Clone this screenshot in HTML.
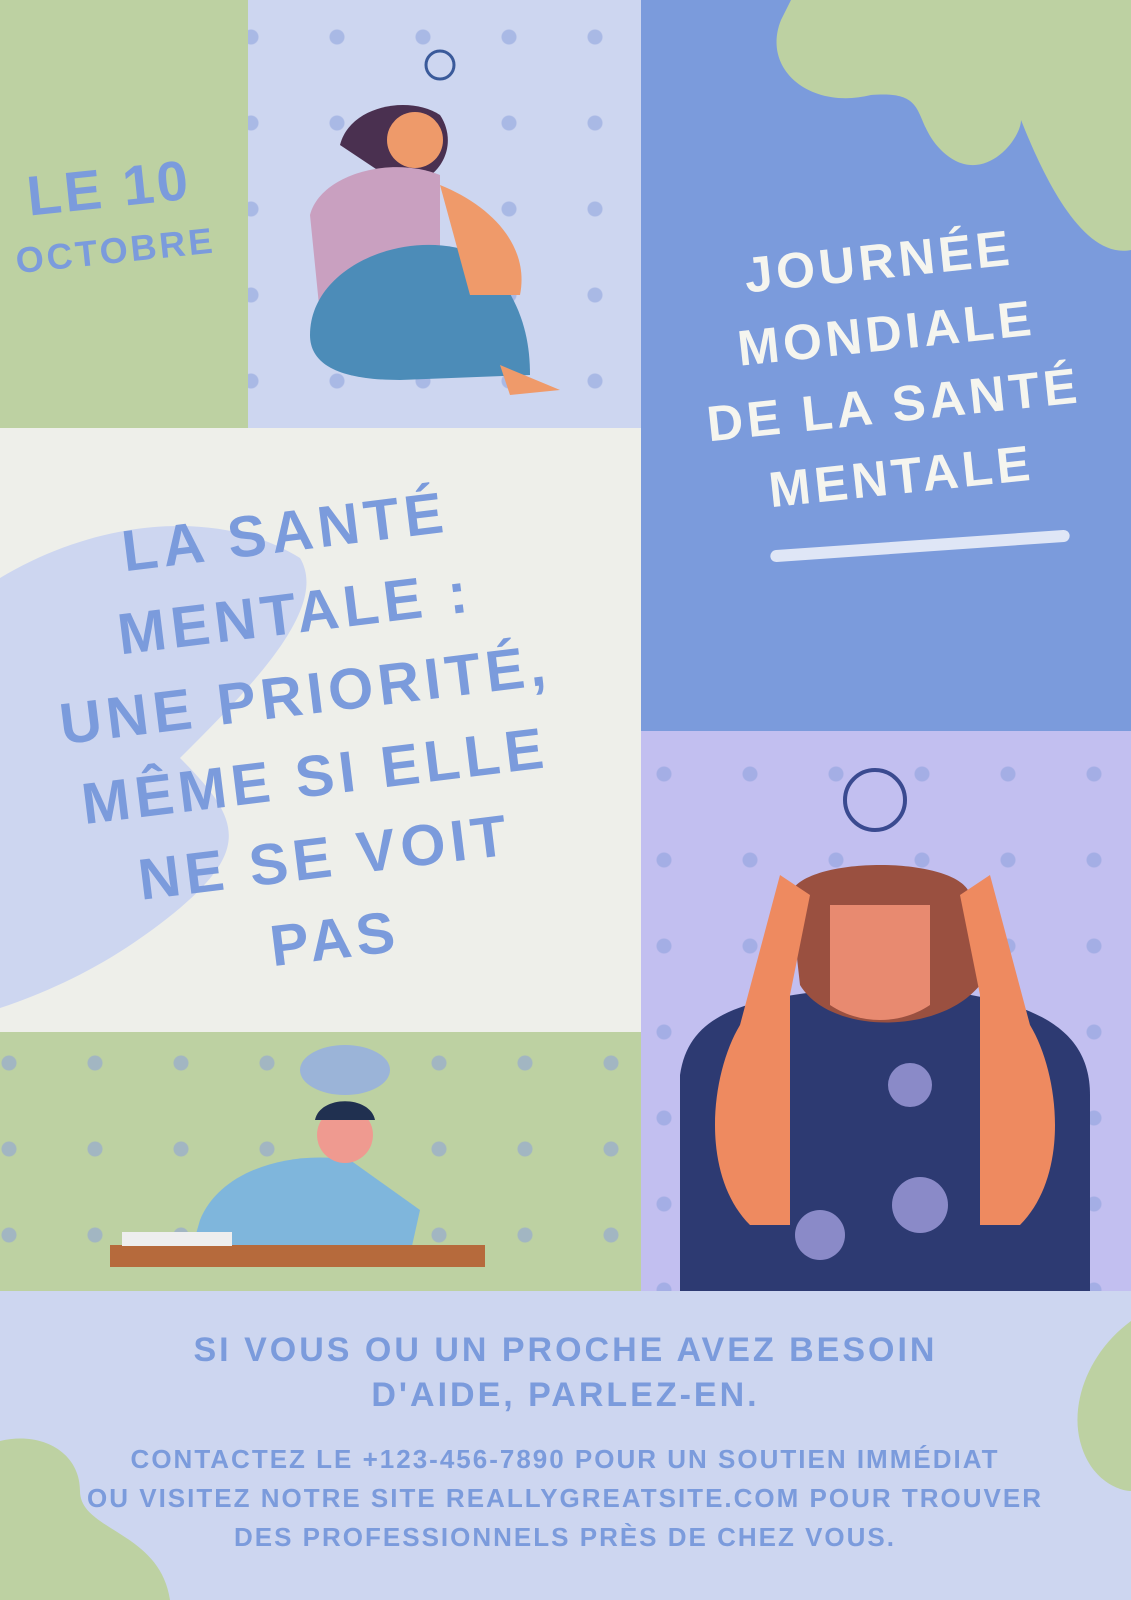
<!DOCTYPE html>
<html><head><meta charset="utf-8"><style>
*{margin:0;padding:0;box-sizing:border-box}
body{width:1131px;height:1600px;position:relative;overflow:hidden;font-family:"Liberation Sans",sans-serif;font-weight:bold;background:#cdd6f0}
.p{position:absolute;overflow:hidden}
.dots{background-image:radial-gradient(circle,rgba(140,160,220,.55) 7px,transparent 8px);background-size:86px 86px}
.t{position:absolute;text-align:center;text-transform:uppercase}
</style></head><body>
<div class="p" style="left:0;top:0;width:248px;height:428px;background:#bdd1a2"></div>
<div class="p dots" style="left:248px;top:0;width:393px;height:428px;background-color:#cdd6f0;background-position:-40px -6px"></div>
<div class="p" style="left:641px;top:0;width:490px;height:731px;background:#7b9bdc">
<svg width="490" height="260" style="position:absolute;left:0;top:0"><path d="M140 20 C120 70 170 110 230 95 C290 90 270 120 300 150 C340 190 380 140 380 120 C400 170 440 260 490 250 L490 0 L150 0 Z" fill="#bdd1a2"/></svg>
</div>
<div class="p" style="left:0;top:428px;width:641px;height:604px;background:#eeefea">
<svg width="641" height="604" style="position:absolute;left:0;top:0"><path d="M0 150 C100 90 220 80 300 130 C330 180 250 260 180 330 C240 390 250 420 180 480 C120 530 60 560 0 580 Z" fill="#cdd6f0"/></svg>
</div>
<div class="p dots" style="left:0;top:1032px;width:641px;height:259px;background-color:#bdd1a2;background-position:-34px -12px"></div>
<div class="p dots" style="left:641px;top:731px;width:490px;height:560px;background-color:#c2bff0;background-position:-20px 0"></div>
<div class="p" style="left:0;top:1291px;width:1131px;height:309px;background:#cdd6f0">
<svg width="1131" height="309" style="position:absolute;left:0;top:0"><path d="M0 150 C40 140 80 160 80 200 C80 240 160 240 170 309 L0 309 Z" fill="#bdd1a2"/><path d="M1131 30 C1090 60 1070 110 1080 150 C1090 190 1120 200 1131 200 Z" fill="#bdd1a2"/></svg>
</div>
<!-- woman -->
<svg style="position:absolute;left:290px;top:35px" width="300" height="395">
<circle cx="150" cy="30" r="14" fill="none" stroke="#3a5a9a" stroke-width="3"/>
<path d="M50 110 C60 70 120 60 150 80 C170 110 150 150 110 150 Z" fill="#4a3050"/>
<path d="M20 180 C30 140 100 120 150 140 L150 280 L30 280 Z" fill="#c9a0c0"/>
<circle cx="125" cy="105" r="28" fill="#ee9a6a"/>
<path d="M20 300 C20 230 120 190 190 220 C230 260 240 300 240 340 L110 345 C50 345 20 330 20 300Z" fill="#4c8cb8"/>
<path d="M150 150 C200 170 240 210 230 260 L180 260 Z" fill="#ef9a6a"/>
<path d="M210 330 L270 355 L220 360 Z" fill="#ef9a6a"/>
</svg>
<!-- man desk -->
<svg style="position:absolute;left:110px;top:1040px" width="390" height="250">
<ellipse cx="235" cy="30" rx="45" ry="25" fill="#9bb4d8"/>
<path d="M90 180 C110 130 180 110 240 120 L310 170 L300 215 L80 215 Z" fill="#7fb6dc"/>
<circle cx="235" cy="95" r="28" fill="#ef9a90"/>
<path d="M205 80 C210 55 260 55 265 80 Z" fill="#203050"/>
<rect x="0" y="205" width="375" height="22" fill="#b66a3c"/>
<rect x="12" y="192" width="110" height="14" fill="#eee"/>
</svg>
<!-- woman2 -->
<svg style="position:absolute;left:680px;top:755px" width="420" height="536">
<circle cx="195" cy="45" r="30" fill="none" stroke="#3a4a90" stroke-width="4"/>
<path d="M0 536 L0 320 C10 250 80 240 210 230 C330 240 410 260 410 340 L410 536Z" fill="#2d3a72"/>
<path d="M110 140 C120 100 280 100 290 140 L300 230 C260 280 150 280 120 230 Z" fill="#9a5040"/>
<path d="M150 150 L250 150 L250 250 C220 270 180 270 150 250 Z" fill="#e88a70"/>
<path d="M60 270 C30 320 20 420 70 470 L110 470 L110 240 L130 140 L100 120 Z" fill="#ee8a60"/>
<path d="M350 270 C380 320 390 420 340 470 L300 470 L300 240 L280 140 L310 120 Z" fill="#ee8a60"/>
<circle cx="230" cy="330" r="22" fill="#8a8ac8"/><circle cx="140" cy="480" r="25" fill="#8a8ac8"/><circle cx="240" cy="450" r="28" fill="#8a8ac8"/>
</svg>
<!-- texts -->
<div class="t" style="left:12px;top:160px;font-size:56px;color:#7b9bdc;transform:rotate(-6deg);letter-spacing:3px;line-height:56px">Le 10<br><span style="font-size:36px">octobre</span></div>
<div class="t" style="left:670px;top:225px;width:440px;font-size:50px;color:#f5f5ef;line-height:72px;letter-spacing:4px;transform:rotate(-6deg)">Journée<br>mondiale<br>de la santé<br>mentale</div>
<div class="p" style="left:770px;top:540px;width:300px;height:12px;background:#dfe6f6;transform:rotate(-4deg);border-radius:6px"></div>
<div class="t" style="left:10px;top:490px;width:600px;font-size:58px;color:#7b9bdc;line-height:82px;letter-spacing:5px;transform:rotate(-7deg)">La santé<br>mentale :<br>une priorité,<br>même si elle<br>ne se voit<br>pas</div>
<div class="t" style="left:0;top:1328px;width:1131px;font-size:34px;color:#7b9bdc;line-height:45px;letter-spacing:3px">Si vous ou un proche avez besoin<br>d'aide, parlez-en.</div>
<div class="t" style="left:40px;top:1440px;width:1050px;font-size:26px;color:#7b9bdc;line-height:39px;letter-spacing:2px">Contactez le +123-456-7890 pour un soutien immédiat<br>ou visitez notre site reallygreatsite.com pour trouver<br>des professionnels près de chez vous.</div>
</body></html>
